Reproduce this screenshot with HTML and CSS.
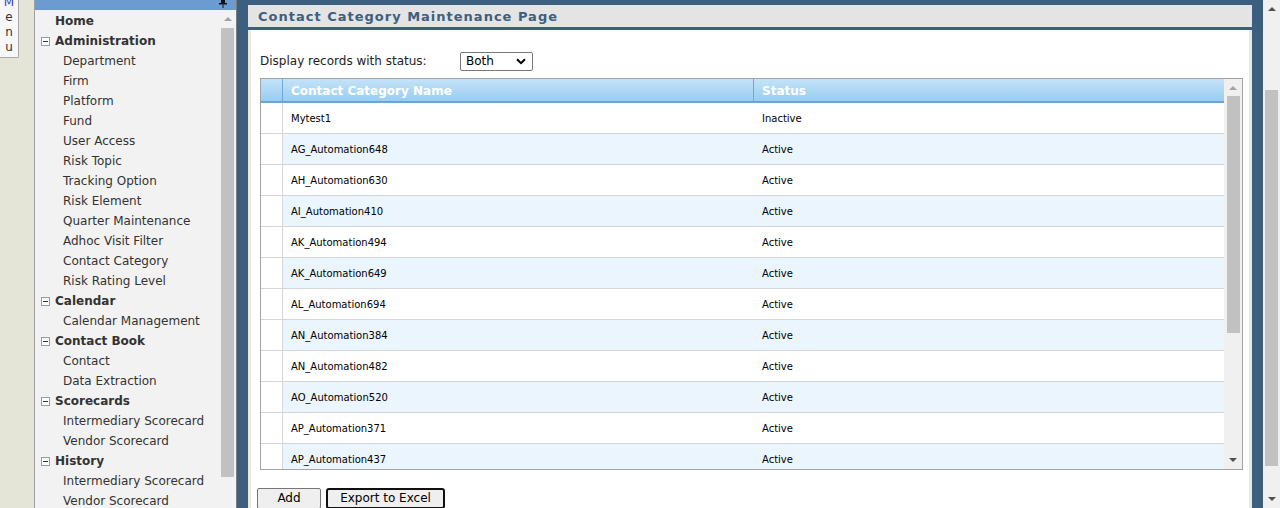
FILE: index.html
```html
<!DOCTYPE html>
<html>
<head>
<meta charset="utf-8">
<title>Contact Category Maintenance Page</title>
<link rel="stylesheet" href="styles.css">
</head>
<body>
<div class="page">
  <div class="strip">
    <div class="menu-tab">
      <span class="mt-m">M</span>
      <span>e</span>
      <span>n</span>
      <span>u</span>
    </div>
  </div>

  <div class="sidebar">
    <div class="sb-top">
      <svg class="pin" width="8" height="9" viewBox="0 0 8 9"><rect x="2" y="0" width="4" height="4" fill="#111"/><rect x="0" y="4" width="8" height="1.5" fill="#111"/><rect x="3.5" y="5.5" width="1" height="3.5" fill="#111"/></svg>
    </div>
    <div class="sb-body">
      <div class="sb-list">
        <div class="sb-home">Home</div>
        <div class="sb-head"><span class="minus"></span>Administration</div>
        <div class="sb-item">Department</div>
        <div class="sb-item">Firm</div>
        <div class="sb-item">Platform</div>
        <div class="sb-item">Fund</div>
        <div class="sb-item">User Access</div>
        <div class="sb-item">Risk Topic</div>
        <div class="sb-item">Tracking Option</div>
        <div class="sb-item">Risk Element</div>
        <div class="sb-item">Quarter Maintenance</div>
        <div class="sb-item">Adhoc Visit Filter</div>
        <div class="sb-item">Contact Category</div>
        <div class="sb-item">Risk Rating Level</div>
        <div class="sb-head"><span class="minus"></span>Calendar</div>
        <div class="sb-item">Calendar Management</div>
        <div class="sb-head"><span class="minus"></span>Contact Book</div>
        <div class="sb-item">Contact</div>
        <div class="sb-item">Data Extraction</div>
        <div class="sb-head"><span class="minus"></span>Scorecards</div>
        <div class="sb-item">Intermediary Scorecard</div>
        <div class="sb-item">Vendor Scorecard</div>
        <div class="sb-head"><span class="minus"></span>History</div>
        <div class="sb-item">Intermediary Scorecard</div>
        <div class="sb-item">Vendor Scorecard</div>
      </div>
      <div class="sb-scroll">
        <div class="arr-zone sb-arr"><span class="tri-up light"></span></div>
        <div class="sb-thumb"></div>
      </div>
    </div>
  </div>

  <div class="main">
    <div class="panel">
      <div class="panel-head">Contact Category Maintenance Page</div>
      <div class="panel-body">
        <div class="filter">
          <span class="filter-label">Display records with status:</span>
          <div class="select">
            <span>Both</span>
            <svg width="10" height="7" viewBox="0 0 10 7"><path d="M1 1.2 L5 5.2 L9 1.2" fill="none" stroke="#000" stroke-width="2"/></svg>
          </div>
        </div>

        <div class="grid">
          <div class="grid-table">
            <div class="g-head">
              <div class="gh-ind"></div>
              <div class="gh-cell gh-name">Contact Category Name</div>
              <div class="gh-cell">Status</div>
            </div>
            <div class="g-row"><div class="g-ind"></div><div class="g-cell">Mytest1</div><div class="g-cell">Inactive</div></div>
            <div class="g-row alt"><div class="g-ind"></div><div class="g-cell">AG_Automation648</div><div class="g-cell">Active</div></div>
            <div class="g-row"><div class="g-ind"></div><div class="g-cell">AH_Automation630</div><div class="g-cell">Active</div></div>
            <div class="g-row alt"><div class="g-ind"></div><div class="g-cell">AI_Automation410</div><div class="g-cell">Active</div></div>
            <div class="g-row"><div class="g-ind"></div><div class="g-cell">AK_Automation494</div><div class="g-cell">Active</div></div>
            <div class="g-row alt"><div class="g-ind"></div><div class="g-cell">AK_Automation649</div><div class="g-cell">Active</div></div>
            <div class="g-row"><div class="g-ind"></div><div class="g-cell">AL_Automation694</div><div class="g-cell">Active</div></div>
            <div class="g-row alt"><div class="g-ind"></div><div class="g-cell">AN_Automation384</div><div class="g-cell">Active</div></div>
            <div class="g-row"><div class="g-ind"></div><div class="g-cell">AN_Automation482</div><div class="g-cell">Active</div></div>
            <div class="g-row alt"><div class="g-ind"></div><div class="g-cell">AO_Automation520</div><div class="g-cell">Active</div></div>
            <div class="g-row"><div class="g-ind"></div><div class="g-cell">AP_Automation371</div><div class="g-cell">Active</div></div>
            <div class="g-row alt"><div class="g-ind"></div><div class="g-cell">AP_Automation437</div><div class="g-cell">Active</div></div>
          </div>
          <div class="g-scroll">
            <div class="arr-zone g-arr-top"><span class="tri-up light"></span></div>
            <div class="g-thumb"></div>
            <div class="g-track"></div>
            <div class="arr-zone g-arr-bot"><span class="tri-down"></span></div>
          </div>
        </div>

        <div class="buttons">
          <button class="btn">Add</button>
          <button class="btn btn-focus">Export to Excel</button>
        </div>
      </div>
    </div>
  </div>

  <div class="pscroll">
    <div class="arr-zone p-arr-top"><span class="tri-up"></span></div>
    <div class="p-thumb"></div>
    <div class="p-track"></div>
    <div class="arr-zone p-arr-bot"><span class="tri-down"></span></div>
  </div>
</div>
</body>
</html>
```

FILE: styles.css
```css
html, body {
  margin: 0;
  padding: 0;
  height: 508px;
  overflow: hidden;
  font-family: "DejaVu Sans", Verdana, sans-serif;
  font-size: 12px;
}

.page {
  display: flex;
  height: 508px;
  width: 1280px;
}

/* left strip */
.strip {
  width: 34px;
  flex: none;
  background: #e4e4d7;
  position: relative;
}
.menu-tab {
  width: 19px;
  height: 64px;
  margin-top: -6px;
  background: #f7f7f7;
  border-right: 1px solid #a8a8a8;
  border-bottom: 1px solid #a8a8a8;
  border-bottom-right-radius: 2px;
  display: flex;
  flex-direction: column;
  align-items: center;
  font-size: 12px;
  line-height: 15px;
  color: #333;
  padding-top: 1px;
  box-sizing: border-box;
}
.menu-tab .mt-m {
  color: #4040c8;
}

/* sidebar */
.sidebar {
  width: 203px;
  flex: none;
  box-sizing: border-box;
  border-left: 1px solid #a0a0a0;
  border-right: 1px solid #7c7c7c;
  background: #f2f2f2;
  display: flex;
  flex-direction: column;
}
.sb-top {
  height: 10px;
  background: #6b9bd0;
  position: relative;
  flex: none;
}
.pin {
  position: absolute;
  right: 9px;
  top: -1px;
}
.sb-body {
  flex: 1;
  display: flex;
  min-height: 0;
}
.sb-list {
  flex: 1;
  color: #333;
  padding-top: 1px;
}
.sb-list > div {
  height: 20px;
  line-height: 20px;
  white-space: nowrap;
  display: flex;
  align-items: center;
}
.sb-home {
  padding-left: 20px;
  font-weight: bold;
}
.sb-head {
  padding-left: 6px;
  font-weight: bold;
}
.sb-item {
  padding-left: 28px;
}
.minus {
  width: 9px;
  height: 9px;
  box-sizing: border-box;
  border: 1px solid #8e9fb3;
  background: #fff;
  margin-right: 5px;
  position: relative;
  flex: none;
}
.minus::after {
  content: "";
  position: absolute;
  left: 1px;
  top: 3px;
  width: 5px;
  height: 1px;
  background: #333;
}
.sb-scroll {
  width: 15px;
  flex: none;
  display: flex;
  flex-direction: column;
  align-items: flex-start;
}
.sb-arr {
  height: 18px;
  width: 13px;
}
.sb-thumb {
  width: 13px;
  height: 449px;
  background: #c1c1c1;
}

/* arrows */
.arr-zone {
  display: flex;
  align-items: center;
  justify-content: center;
  flex: none;
}
.tri-up {
  width: 0;
  height: 0;
  border-left: 4px solid transparent;
  border-right: 4px solid transparent;
  border-bottom: 4px solid #505050;
}
.tri-down {
  width: 0;
  height: 0;
  border-left: 4px solid transparent;
  border-right: 4px solid transparent;
  border-top: 4px solid #505050;
}
.tri-up.light {
  border-bottom-color: #a3a3a3;
}

/* main */
.main {
  width: 1026px;
  flex: none;
  background: #3c5f80;
  padding: 5px 11px 0 11px;
  box-sizing: border-box;
  display: flex;
  flex-direction: column;
}
.panel {
  flex: 1;
  display: flex;
  flex-direction: column;
  min-height: 0;
}
.panel-head {
  height: 22px;
  box-sizing: border-box;
  padding-top: 1px;
  line-height: 21px;
  background: #e4e4e4;
  color: #3c5f80;
  font-weight: bold;
  font-size: 13px;
  letter-spacing: 1px;
  padding-left: 10px;
  margin-bottom: 3px;
  flex: none;
}
.panel-body {
  flex: 1;
  background: #fff;
  border-left: 3px solid #ece9d8;
  border-right: 3px solid #ece9d8;
  padding: 21px 6px 0 6px;
  overflow: hidden;
}
.filter {
  display: flex;
  align-items: center;
  height: 20px;
  padding-left: 3px;
  color: #222;
}
.filter-label {
  width: 200px;
}
.select {
  width: 73px;
  height: 19px;
  box-sizing: border-box;
  border: 1px solid #767676;
  border-radius: 2px;
  display: flex;
  align-items: center;
  justify-content: space-between;
  padding: 0 6px 0 5px;
  color: #000;
}

/* grid */
.grid {
  margin: 7px 0 0 3px;
  height: 392px;
  box-sizing: border-box;
  border: 1px solid #a3a3a3;
  display: flex;
  overflow: hidden;
}
.grid-table {
  flex: 1;
  overflow: hidden;
}
.g-head {
  display: grid;
  grid-template-columns: 22px 471px 1fr;
  height: 24px;
  box-sizing: border-box;
  background: linear-gradient(#c3e3f9, #99cdf1);
  border-bottom: 2px solid #68a6da;
}
.gh-ind {
  border-right: 1px solid #6ea7d8;
}
.gh-cell {
  color: #fff;
  font-weight: bold;
  font-size: 12px;
  padding-top: 3px;
  line-height: 19px;
  padding-left: 8px;
  white-space: nowrap;
}
.gh-name {
  border-right: 1px solid #6ea7d8;
}
.g-row {
  display: grid;
  grid-template-columns: 22px 471px 1fr;
  height: 31px;
  box-sizing: border-box;
  border-bottom: 1px solid #d6d6d6;
  font-size: 10px;
  color: #000;
}
.g-row.alt .g-cell {
  background: #ebf5fe;
}
.g-ind {
  background: #fff;
  border-right: 1px solid #d6d6d6;
}
.g-cell {
  padding-top: 2px;
  line-height: 28px;
  padding-left: 8px;
  white-space: nowrap;
}
.g-scroll {
  width: 18px;
  flex: none;
  background: #f0f0f0;
  display: flex;
  flex-direction: column;
  align-items: center;
}
.g-arr-top {
  height: 17px;
  width: 18px;
}
.g-thumb {
  width: 13px;
  height: 237px;
  background: #c1c1c1;
  flex: none;
}
.g-track {
  flex: 1;
}
.g-arr-bot {
  height: 18px;
  width: 18px;
}

/* buttons */
.buttons {
  margin-top: 18px;
  display: flex;
  gap: 5px;
}
.btn {
  font-family: "DejaVu Sans", Verdana, sans-serif;
  font-size: 12px;
  height: 21px;
  padding: 0;
  margin: 0;
  background: #efefef;
  border: 1px solid #767676;
  border-radius: 2px;
  color: #000;
  line-height: 17px;
}
.buttons .btn:first-child {
  width: 64px;
}
.btn-focus {
  width: 119px;
  border: 2px solid #101010;
  border-radius: 3px;
}

/* page scrollbar */
.pscroll {
  width: 17px;
  flex: none;
  background: #f0f0f0;
  display: flex;
  flex-direction: column;
  align-items: center;
}
.p-arr-top {
  height: 17px;
  width: 17px;
}
.p-thumb {
  margin-top: 73px;
  width: 13px;
  height: 376px;
  background: #c1c1c1;
  flex: none;
}
.p-track {
  flex: 1;
}
.p-arr-bot {
  height: 19px;
  width: 17px;
}
```
